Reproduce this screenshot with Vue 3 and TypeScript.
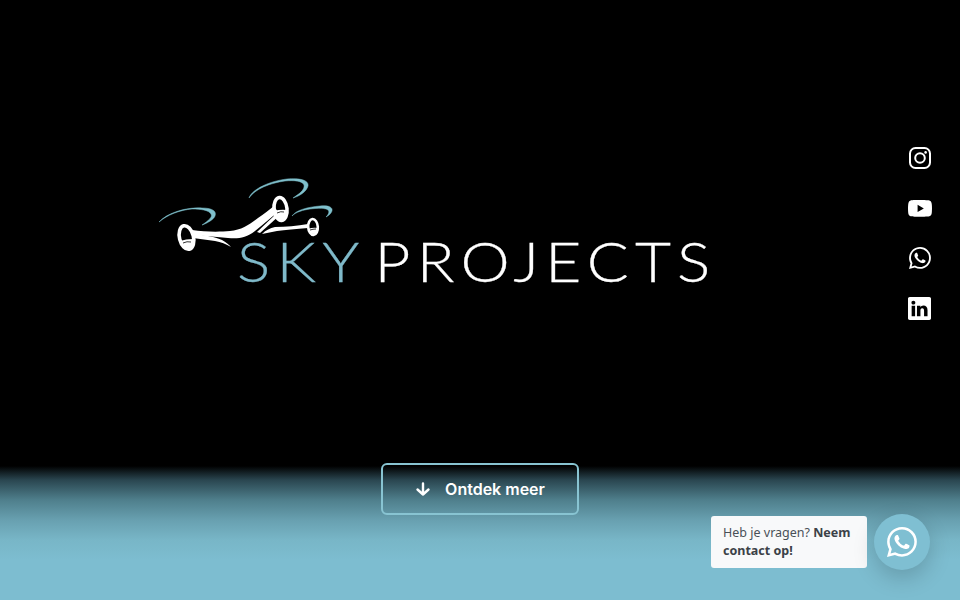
<template>
  <section class="hero">
    <div class="logo">
      <svg class="drone" viewBox="0 0 200 120" width="200" height="120" aria-hidden="true">
        <g fill="#7fc0cc" stroke="#7fc0cc" stroke-width="0.500">
          <path d="M9 52C18 42 38 37 52 38C62 38 67 41 65 46C64 49 58 53 52 55C58 51 63 47 61 44C59 40 50 39 42 39C30 40 17 45 9 52Z" />
          <path d="M99 28C102 19 120 11 137 9C150 8 159 10 158 16C157 21 150 26 143 28C149 24 155 20 154 15C153 11 144 10 135 11C120 13 105 19 99 28Z" />
          <path d="M142 46C146 40 158 37 170 36C178 35 183 37 182 41C181 44 178 46 176 47C178 45 180 42 178 40C176 38 168 38 160 39C153 40 146 42 142 46Z" />
        </g>
        <g fill="#fff">
          <path d="M42 60C55 62 70 62 80 61C92 60 100 54 108 48C114 44 119 40 124 36L128 42C120 48 113 55 105 61C96 68 88 69 78 68C68 67 55 66 43 65Z" />
          <path d="M43 64C54 65 66 67 72 70C76 72 79 75 81 77C76 74 71 72 65 71C58 70 50 69 43 68Z" />
          <path d="M107 62L127 43L130 45L110 63Z" />
          <path d="M112 64C116 60 120 58 125 57C136 57 147 56 158 54L158 58C146 59 135 60 127 61C122 62 117 63 112 64Z" />
        </g>
        <g fill="none" stroke="#fff">
          <ellipse cx="36.500" cy="67.500" rx="7" ry="12" stroke-width="3.600" transform="rotate(-14 36.500 67.500)" />
          <ellipse cx="130.500" cy="39" rx="6.500" ry="11.500" stroke-width="3.600" transform="rotate(-6 130.500 39)" />
          <ellipse cx="163" cy="57" rx="4.800" ry="8" stroke-width="2.600" transform="rotate(-4 163 57)" />
        </g>
        <g fill="#fff">
          <path d="M30 71Q36 69 43 69Q44 79 38 79Q32 80 30 71Z" />
          <path d="M124 41Q131 39 137 40Q137 50 131 50Q125 50 124 41Z" />
          <path d="M158 59Q163 57 168 58Q168 64 163 64Q159 64 158 59Z" />
        </g>
        <g fill="none" stroke="#000" stroke-width="0.800">
          <path d="M33 73Q37 71 41 72" />
          <path d="M127 43Q131 41 134 42" />
          <path d="M160 60Q163 59 166 59" />
        </g>
      </svg>
      <h1 class="wordmark"><span class="sky">SKY</span> <span>PROJECTS</span></h1>
    </div>

    <a class="more" href="#">
      <svg viewBox="0 0 16 16" width="16" height="16" fill="none" stroke="#fff" stroke-width="2.400" stroke-linecap="round" stroke-linejoin="round" aria-hidden="true">
        <path d="M8 2.500V13.500M2.500 8.500L8 13.500L13.500 8.500" />
      </svg>
      <span>Ontdek meer</span>
    </a>

    <nav class="socials">
      <a href="#" aria-label="Instagram">
        <svg viewBox="0 0 24 24" width="24" height="24" fill="none" stroke="#fff" stroke-width="2">
          <rect x="2" y="2" width="20" height="20" rx="5.500" />
          <circle cx="12" cy="12" r="4.800" />
          <circle cx="17.600" cy="6.400" r="1.300" fill="#fff" stroke="none" />
        </svg>
      </a>
      <a href="#" aria-label="YouTube">
        <svg class="yt" viewBox="0 0 16 16" width="24" height="24" fill="#fff">
          <path d="M8.051 1.999h.089c.822.003 4.987.033 6.11.335a2.01 2.01 0 0 1 1.415 1.42c.101.38.172.883.22 1.402l.01.104.022.26.008.104c.065.914.073 1.77.074 1.957v.075c-.001.194-.01 1.108-.082 2.06l-.008.105-.009.104c-.05.572-.124 1.14-.235 1.558a2.007 2.007 0 0 1-1.415 1.42c-1.16.312-5.569.334-6.18.335h-.142c-.309 0-1.587-.006-2.927-.052l-.17-.006-.087-.004-.171-.007-.171-.007c-1.11-.049-2.167-.128-2.654-.26a2.007 2.007 0 0 1-1.415-1.419c-.111-.417-.185-.986-.235-1.558L.09 9.820l-.008-.104A31.4 31.4 0 0 1 0 7.680v-.123c.002-.215.01-.958.064-1.778l.007-.103.003-.052.008-.104.022-.26.01-.104c.048-.519.119-1.023.22-1.402a2.007 2.007 0 0 1 1.415-1.42c.487-.13 1.544-.21 2.654-.26l.17-.007.172-.006.086-.003.171-.007A99.788 99.788 0 0 1 7.858 2h.193zM6.400 5.209v4.818l4.157-2.408L6.400 5.209z" />
        </svg>
      </a>
      <a href="#" aria-label="WhatsApp">
        <svg viewBox="0 0 16 16" width="22" height="22" fill="#fff">
          <path :d="whatsapp" />
        </svg>
      </a>
      <a href="#" aria-label="LinkedIn">
        <svg class="in" viewBox="0 0 16 16" width="23" height="23" fill="#fff">
          <path d="M0 1.146C0 .513.526 0 1.175 0h13.650C15.474 0 16 .513 16 1.146v13.708c0 .633-.526 1.146-1.175 1.146H1.175C.526 16 0 15.487 0 14.854V1.146zm4.943 12.248V6.169H2.542v7.225h2.401zm-1.200-8.212c.837 0 1.358-.554 1.358-1.248-.015-.709-.52-1.248-1.342-1.248-.822 0-1.359.54-1.359 1.248 0 .694.521 1.248 1.327 1.248h.016zm4.908 8.212V9.359c0-.216.016-.432.08-.586.173-.431.568-.878 1.232-.878.869 0 1.216.662 1.216 1.634v3.865h2.401V9.250c0-2.220-1.184-3.252-2.764-3.252-1.274 0-1.845.7-2.165 1.193v.025h-.016a5.540 5.540 0 0 1 .016-.025V6.169h-2.400c.03.678 0 7.225 0 7.225h2.400z" />
        </svg>
      </a>
    </nav>

    <div class="chat">
      <p class="bubble">Heb je vragen? <b>Neem</b><br /><b>contact op!</b></p>
      <button class="chat-btn" type="button" aria-label="WhatsApp">
        <svg viewBox="0 0 16 16" width="30" height="30" fill="#fff">
          <path :d="whatsapp" />
        </svg>
      </button>
    </div>
  </section>
</template>

<script setup lang="ts">
const whatsapp =
  'M13.601 2.326A7.854 7.854 0 0 0 7.994 0C3.627 0 .068 3.558.064 7.926c0 1.399.366 2.760 1.057 3.965L0 16l4.204-1.102a7.933 7.933 0 0 0 3.790.965h.004c4.368 0 7.926-3.558 7.930-7.930A7.898 7.898 0 0 0 13.600 2.326zM7.994 14.521a6.573 6.573 0 0 1-3.356-.92l-.24-.144-2.494.654.666-2.433-.156-.251a6.560 6.560 0 0 1-1.007-3.505c0-3.626 2.957-6.584 6.591-6.584a6.560 6.560 0 0 1 4.660 1.931 6.557 6.557 0 0 1 1.928 4.660c-.004 3.639-2.961 6.592-6.592 6.592zm3.615-4.934c-.197-.099-1.170-.578-1.353-.646-.182-.065-.315-.099-.445.099-.133.197-.513.646-.627.775-.114.133-.232.148-.43.05-.197-.1-.836-.308-1.592-.985-.59-.525-.985-1.175-1.103-1.372-.114-.198-.011-.304.088-.403.087-.088.197-.232.296-.346.1-.114.133-.198.198-.33.065-.134.034-.248-.015-.347-.05-.099-.445-1.076-.612-1.470-.16-.389-.323-.335-.445-.34-.114-.007-.247-.007-.38-.007a.729.729 0 0 0-.529.247c-.182.198-.691.677-.691 1.654 0 .977.71 1.916.81 2.049.098.133 1.394 2.132 3.383 2.992.47.205.84.326 1.129.418.475.152.904.129 1.246.08.38-.058 1.171-.48 1.338-.943.164-.464.164-.86.114-.943-.049-.084-.182-.133-.38-.232z'
</script>

<style>
html,
body {
  margin: 0;
  background: #000;
}
</style>

<style scoped>
.hero {
  position: relative;
  display: flex;
  flex-direction: column;
  height: 600px;
  overflow: hidden;
  background: linear-gradient(180deg, #000 0, #000 466px, #2a4650 480px, #4f7f8c 500px, #68a0b0 520px, #78b6c7 540px, #7dbdd0 560px, #7dbdd0 600px);
}

.logo {
  position: relative;
  margin: 229px 0 0 237px;
  height: 60px;
}

.drone {
  position: absolute;
  left: -87px;
  top: -59px;
}

.wordmark {
  margin: 0;
  font: 300 55.500px/64px Lato, "Open Sans", sans-serif;
  letter-spacing: 5.600px;
  word-spacing: -10.500px;
  color: #fff;
  white-space: nowrap;
  -webkit-text-stroke: 0.3px currentColor;
  transform: scaleX(1.12);
  transform-origin: left center;
}

.sky {
  color: #7fb9c9;
}

.more {
  display: flex;
  align-items: center;
  justify-content: center;
  gap: 14px;
  align-self: center;
  box-sizing: border-box;
  width: 198px;
  height: 52px;
  margin-top: auto;
  margin-bottom: 85px;
  border: 2px solid #88c4d2;
  border-radius: 6px;
  font: 600 16px Inter, Roboto, sans-serif;
  color: #fff;
  text-decoration: none;
}

.socials {
  position: absolute;
  top: 133px;
  right: 28px;
  display: flex;
  flex-direction: column;
}

.socials a {
  display: flex;
  align-items: center;
  justify-content: center;
  width: 24px;
  height: 50px;
}

.yt {
  margin-top: 1px;
}

.in {
  margin-right: 1px;
}

.chat {
  position: absolute;
  right: 30px;
  bottom: 30px;
  display: flex;
  align-items: center;
  gap: 7px;
}

.bubble {
  box-sizing: border-box;
  width: 156px;
  margin: 0;
  padding: 8px 10px 8px 12px;
  background: #f8f9fa;
  border-radius: 3px;
  font: 12.500px/18px "Noto Sans", sans-serif;
  color: #495057;
}

.bubble b {
  color: #3b4147;
}

.chat-btn {
  display: flex;
  align-items: center;
  justify-content: center;
  width: 56px;
  height: 56px;
  padding: 0;
  border: 0;
  border-radius: 50%;
  background: #7fbfd2;
  box-shadow: 0 8px 22px rgba(0, 0, 0, 0.18);
}
</style>
